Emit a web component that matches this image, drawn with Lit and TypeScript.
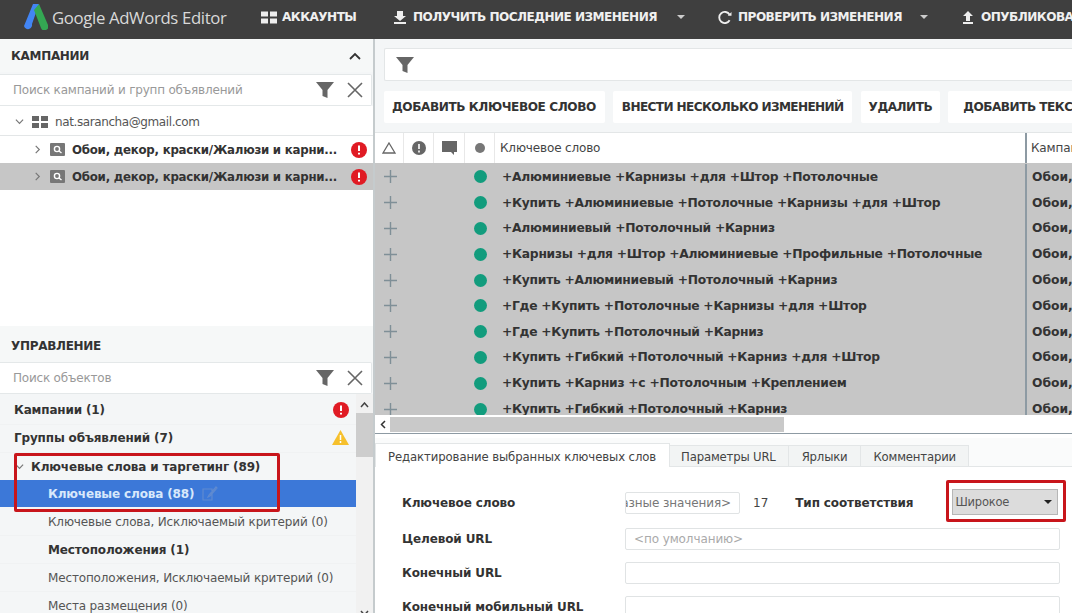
import { LitElement, html, css, svg } from "lit";
import { customElement } from "lit/decorators.js";

const keywords = [
  "+Алюминиевые +Карнизы +для +Штор +Потолочные",
  "+Купить +Алюминиевые +Потолочные +Карнизы +для +Штор",
  "+Алюминиевый +Потолочный +Карниз",
  "+Карнизы +для +Штор +Алюминиевые +Профильные +Потолочные",
  "+Купить +Алюминиевый +Потолочный +Карниз",
  "+Где +Купить +Потолочные +Карнизы +для +Штор",
  "+Где +Купить +Потолочный +Карниз",
  "+Купить +Гибкий +Потолочный +Карниз +для +Штор",
  "+Купить +Карниз +с +Потолочным +Креплением",
  "+Купить +Гибкий +Потолочный +Карниз",
];

const filterIcon = (cls: string) => html`<svg class=${cls} viewBox="0 0 18 18"><path d="M0 1h18l-6.5 8v8l-5-2V9z" fill="#666"/></svg>`;
const closeIcon = html`<svg class="ic16" viewBox="0 0 16 16"><path d="M1 1l14 14M15 1L1 15" stroke="#666" stroke-width="1.6" fill="none"/></svg>`;
const err = html`<svg class="ic16" viewBox="0 0 16 16"><circle cx="8" cy="8" r="8" fill="#e01b24"/><path d="M8 3.5v5.5M8 10.8v1.8" stroke="#fff" stroke-width="2" fill="none"/></svg>`;
const warn = html`<svg class="ic17" viewBox="0 0 17 15"><path d="M8.5 0L17 15H0z" fill="#f6c02c"/><path d="M8.5 5v5M8.5 11v2" stroke="#fff" stroke-width="1.5" fill="none"/></svg>`;
const gridIcon = (c: string) => svg`<path d="M0 0h7v5H0zM9 0h7v5H9zM0 7h7v5H0zM9 7h7v5H9z" fill=${c}/>`;
const chevR = html`<svg class="chev" viewBox="0 0 8 10"><path d="M2 1l4 4-4 4" stroke="#777" stroke-width="1.3" fill="none"/></svg>`;
const chevD = html`<svg class="chev" viewBox="0 0 10 8"><path d="M1 2l4 4 4-4" stroke="#777" stroke-width="1.3" fill="none"/></svg>`;
const caret = html`<svg class="caret" viewBox="0 0 8 4"><path d="M0 0h8L4 4z" fill="#ccc"/></svg>`;
const campIcon = html`<svg class="camp" viewBox="0 0 15 13"><rect width="15" height="13" rx="1" fill="#777"/><circle cx="7" cy="6" r="2.6" fill="none" stroke="#fff" stroke-width="1.4"/><path d="M9 8l2.5 2" stroke="#fff" stroke-width="1.4"/></svg>`;

@customElement("app-root")
export class AppRoot extends LitElement {
  static styles = css`
    :host { display: block; width: 1072px; height: 613px; overflow: hidden; position: relative; background: #f4f6f7;
      font-family: "DejaVu Sans", Tahoma, sans-serif; color: #333; }
    * { box-sizing: border-box; }
    svg { display: block; flex: none; }
    .ic16 { width: 16px; height: 16px; }
    .ic17 { width: 17px; height: 15px; }
    .ic18 { width: 18px; height: 18px; }
    .chev { width: 9px; height: 9px; }
    .caret { width: 8px; height: 4px; }
    .camp { width: 15px; height: 13px; }

    header { height: 39px; padding-bottom: 5px; background: #3f3f3f; display: flex; align-items: center; white-space: nowrap; overflow: hidden; color: #f0f0f0; }
    .logo { width: 24px; height: 26px; margin-left: 24px; }
    .brand { font: 16.75px "Open Sans", sans-serif; letter-spacing: -0.35px; color: #d9d9d9; margin-left: 4px; width: 209px; flex: none; }
    .tb { display: flex; align-items: center; gap: 5px; font: 700 12.1px "DejaVu Sans", sans-serif; letter-spacing: -0.55px; flex: none; }
    .tb svg.i { width: 16px; height: 13px; }
    .t1 { width: 131px; }
    .t2 { width: 325px; }
    .t3 { width: 243px; }
    .s2 { width: 10px; }
    .s3 { width: 8px; }

    main { display: grid; grid-template-columns: 373px 2px 1fr; height: 574px; }
    .left { display: flex; flex-direction: column; min-width: 0; }
    .split { background: #c5cbcd; }
    .phead { height: 33px; display: flex; align-items: center; justify-content: space-between; padding: 0 12px 0 11px; font: 700 12px "DejaVu Sans", sans-serif; letter-spacing: -0.3px; color: #333; background: #f6f8f8; flex: none; }
    .search { height: 32px; background: #fff; border: 1px solid #e4e8e9; border-left: 0; border-radius: 0 2px 2px 0; margin-right: 1px; display: flex; align-items: center; padding: 0 8px 0 13px; gap: 13px; color: #999; font-size: 12px; letter-spacing: -0.2px; flex: none; }
    .search span { flex: 1; }
    .search.first { margin-top: 2px; }

    .tree { background: #fff; height: 220px; flex: none; }
    .acct { height: 30px; padding-top: 2px; display: flex; align-items: center; padding-left: 15px; font-size: 12px; color: #555; border-bottom: 1px solid #e3e6e7; letter-spacing: -0.4px; }
    .acct svg.g { width: 16px; height: 12px; margin: 0 7px 0 8px; }
    .camp-row { height: 27px; display: flex; align-items: center; padding: 0 6px 0 33px; font-size: 11.8px; font-weight: 700; color: #333; letter-spacing: -0.25px; white-space: nowrap; }
    .camp-row.sel { background: #c6c6c6; }
    .camp-row .camp { margin: 0 7px 0 8px; }
    .camp-row span { flex: 1; overflow: hidden; }
    .gap { height: 3px; flex: none; background: #f6f8f8; }

    .list { flex: 1; display: grid; grid-template-columns: 1fr 17px; min-height: 0; }
    .items { padding-top: 3px; overflow: hidden; }
    .it { height: 28px; display: flex; align-items: center; font-size: 12px; color: #555; white-space: nowrap; letter-spacing: -0.15px; padding-right: 7px; border-bottom: 1px solid #f0f2f3; }
    .it span { flex: 1; }
    .it.l1 { padding-left: 14px; padding-bottom: 2px; font-weight: 700; color: #333; }
    .it.l2 { padding-left: 15px; font-weight: 700; color: #333; gap: 7px; height: 27px; border: 0; }
    .it.l3 { padding-left: 48px; }
    .it.b { font-weight: 700; color: #333; }
    .it.sel { background: #3c78d8; color: #d8e8fb; font-weight: 700; height: 27px; border: 0; margin-bottom: 1px; }
    .it.sel span { flex: none; }
    .edit { width: 16px; height: 15px; margin-left: 8px; }
    .sb { background: #f1f1f1; display: flex; flex-direction: column; align-items: center; position: relative; }
    .sb .arr { width: 9px; height: 6px; margin: 8px 0 5px; }
    .sb .thumb { width: 100%; height: 44px; background: #cdcdcd; }
    .sb .dn { position: absolute; bottom: -1px; }

    .right { display: flex; flex-direction: column; min-width: 0; overflow: hidden; }
    .filter { height: 33px; margin: 9px 0 0 9px; background: #fff; border: 1px solid #e3e6e7; border-right: 0; border-radius: 2px 0 0 2px; display: flex; align-items: center; padding-left: 11px; flex: none; }
    .actions { display: flex; gap: 8px; height: 32px; margin: 10px 0 0 9px; flex: none; white-space: nowrap; }
    .act { background: #fff; padding: 0 8px; display: flex; align-items: center; font: 700 12.1px "DejaVu Sans", sans-serif; letter-spacing: -0.5px; color: #333; border-radius: 2px; flex: none; }
    .act.first { padding-right: 9px; letter-spacing: -0.42px; }
    .act.wide { padding-left: 9px; letter-spacing: -0.62px; margin-right: 1px; }
    .act.last { padding-left: 15px; }
    .tbl { margin-top: 9px; height: 283px; overflow: hidden; background: #c6c6c6; flex: none; border-top: 1px solid #e3e6e7; }
    .tr { display: grid; grid-template-columns: 29px 30px 31px 30px 532px 1fr; align-items: center; height: 25.8px; white-space: nowrap; }
    .tr.h { height: 30px; margin-bottom: 1px; background: #fff; font-size: 12px; color: #444; letter-spacing: -0.15px; align-items: stretch; }
    .tr.h > div { display: flex; align-items: center; justify-content: center; border-right: 1px solid #e8e8e8; }
    .tr.h > .k { justify-content: flex-start; padding-left: 5px; border-right: 2px solid #8d9aa3; }
    .tr.h > .c { justify-content: flex-start; padding-left: 4px; border: 0; overflow: hidden; }
    .plus { width: 13px; height: 13px; margin-left: 9px; }
    .dot { width: 13px; height: 13px; border-radius: 50%; background: #129c7d; margin-left: 9px; }
    .kw { font-size: 12.3px; font-weight: 700; color: #333; padding-left: 7px; letter-spacing: -0.27px; border-right: 2px solid #8d9aa3; height: 100%; display: flex; align-items: center; }
    .cm { font-size: 12.3px; font-weight: 700; color: #333; padding-left: 5px; overflow: hidden; }
    .hs { height: 18px; background: #fff; display: flex; align-items: center; flex: none; }
    .hs .l { width: 15px; display: flex; justify-content: center; }
    .hs .l svg { width: 6px; height: 9px; }
    .hs .t { width: 394px; height: 15px; background: #c9c9c9; }
    .rule { height: 1px; background: #8d9aa3; flex: none; }
    .bottom { flex: 1; background: #fff; min-height: 0; overflow: hidden; }
    .tabs { display: flex; height: 29px; margin-top: 4px; align-items: flex-end; border-bottom: 1px solid #e3e6e7; background: #fafbfb; margin-bottom: 22px; }
    .tab { height: 21px; padding-top: 2px; background: #f2f4f4; border: 1px solid #e3e6e7; border-left: 0; border-bottom: 0; font-size: 11.7px; color: #444; display: flex; align-items: center; padding-right: 12px; padding-left: 11px; letter-spacing: -0.18px; white-space: nowrap; }
    .tab:nth-child(n+3) { padding-left: 13px; }
    .tab.on { background: #fff; height: 24px; border-left: 1px solid #e3e6e7; margin-bottom: -1px; padding-right: 13px; padding-left: 12px; letter-spacing: -0.1px; }
    .form { display: grid; grid-template-columns: 223px 1fr; row-gap: 12px; padding: 0 12px 0 27px; align-items: center; }
    .lb { font-size: 12px; font-weight: 700; color: #333; letter-spacing: -0.12px; white-space: nowrap; }
    .inp { height: 22px; background: #fff; border: 1px solid #e0e3e4; border-radius: 2px; font-size: 12px; color: #aaa; display: flex; align-items: center; padding-left: 8px; letter-spacing: -0.1px; white-space: nowrap; overflow: hidden; }
    .line { display: flex; align-items: center; }
    .line .inp { width: 115px; color: #777; padding-left: 2px; justify-content: flex-end; padding-right: 8px; }
    .line .n { font-size: 12px; color: #444; margin: 0 27px 0 13px; }
    .sel-box { margin: 0 0 1px 39px; width: 106px; height: 26px; background: #dcdcdc; border: 1px solid #b6b6b6; display: flex; align-items: center; justify-content: space-between; padding: 0 4px 0 2px; font-size: 11.5px; letter-spacing: -0.2px; color: #555; }
    .sel-box svg { width: 8px; height: 4px; margin-right: 1px; }

    .mark { position: absolute; border: 3px solid #c8151b; border-radius: 2px; pointer-events: none; }
    .m1 { left: 14px; top: 453px; width: 266px; height: 59px; }
    .m2 { left: 946px; top: 480px; width: 120px; height: 42px; }
  `;

  render() {
    return html`
      <header>
        <svg class="logo" viewBox="0 0 24 26">
          <path d="M9 0h6L8 20a4 4 0 0 1-8 2z" fill="#4285f4"/>
          <path d="M15 0l9 21a3.5 3.5 0 0 1-7 3L10 6z" fill="#34a853"/>
        </svg>
        <div class="brand">Google AdWords Editor</div>
        <div class="tb t1"><svg class="i" viewBox="0 0 16 12">${gridIcon("#eee")}</svg>АККАУНТЫ</div>
        <div class="tb t2">
          <svg class="i" viewBox="0 0 16 13"><path d="M5 0h6v5h3L8 10 2 5h3zM2 11h12v2H2z" fill="#eee"/></svg>ПОЛУЧИТЬ ПОСЛЕДНИЕ ИЗМЕНЕНИЯ
          <span class="s2"></span>${caret}
        </div>
        <div class="tb t3">
          <svg class="i" viewBox="0 0 16 14"><path d="M13 4a6 6 0 1 0 0 6" fill="none" stroke="#eee" stroke-width="2"/><path d="M11 5h4V1z" fill="#eee"/></svg>ПРОВЕРИТЬ ИЗМЕНЕНИЯ
          <span class="s3"></span>${caret}
        </div>
        <div class="tb">
          <svg class="i" viewBox="0 0 16 13"><path d="M8 0l5 5h-3v5H6V5H3zM3 11h10v2H3z" fill="#eee"/></svg>ОПУБЛИКОВАТЬ
        </div>
      </header>
      <main>
        <section class="left">
          <div class="phead">КАМПАНИИ <svg style="width:12px;height:8px" viewBox="0 0 12 8"><path d="M1 7l5-5 5 5" stroke="#333" stroke-width="1.8" fill="none"/></svg></div>
          <div class="search first"><span>Поиск кампаний и групп объявлений</span>${filterIcon("ic18")}${closeIcon}</div>
          <div class="tree">
            <div class="acct">${chevD}<svg class="g" viewBox="0 0 16 12">${gridIcon("#666")}</svg>nat.sarancha@gmail.com</div>
            <div class="camp-row">${chevR}${campIcon}<span>Обои, декор, краски/Жалюзи и карни...</span>${err}</div>
            <div class="camp-row sel">${chevR}${campIcon}<span>Обои, декор, краски/Жалюзи и карни...</span>${err}</div>
          </div>
          <div class="gap"></div>
          <div class="phead">УПРАВЛЕНИЕ</div>
          <div class="search"><span>Поиск объектов</span>${filterIcon("ic18")}${closeIcon}</div>
          <div class="list">
            <div class="items">
              <div class="it l1"><span>Кампании (1)</span>${err}</div>
              <div class="it l1"><span>Группы объявлений (7)</span>${warn}</div>
              <div class="it l2">${chevD}<span>Ключевые слова и таргетинг (89)</span></div>
              <div class="it l3 sel"><span>Ключевые слова (88)</span>
                <svg class="edit" viewBox="0 0 16 15"><path d="M1 3h9v11H1zM14 1L7 9l-1 2 2-1 7-8z" fill="none" stroke="#5f8ad0" stroke-width="1.2"/></svg></div>
              <div class="it l3"><span>Ключевые слова, Исключаемый критерий (0)</span></div>
              <div class="it l3 b"><span>Местоположения (1)</span></div>
              <div class="it l3"><span>Местоположения, Исключаемый критерий (0)</span></div>
              <div class="it l3"><span>Места размещения (0)</span></div>
            </div>
            <div class="sb">
              <svg class="arr" viewBox="0 0 9 6"><path d="M1 5l3.5-4L8 5" stroke="#444" stroke-width="1.5" fill="none"/></svg>
              <div class="thumb"></div>
              <svg class="arr dn" viewBox="0 0 9 6"><path d="M1 1l3.5 4L8 1" stroke="#444" stroke-width="1.5" fill="none"/></svg>
            </div>
          </div>
        </section>
        <div class="split"></div>
        <section class="right">
          <div class="filter">${filterIcon("ic18")}</div>
          <div class="actions">
            <div class="act first">ДОБАВИТЬ КЛЮЧЕВОЕ СЛОВО</div>
            <div class="act wide">ВНЕСТИ НЕСКОЛЬКО ИЗМЕНЕНИЙ</div>
            <div class="act">УДАЛИТЬ</div>
            <div class="act last">ДОБАВИТЬ ТЕКСТ</div>
          </div>
          <div class="tbl">
            <div class="tr h">
              <div><svg style="width:14px;height:12px" viewBox="0 0 14 12"><path d="M7 1l6 10H1z" fill="none" stroke="#666" stroke-width="1.3"/></svg></div>
              <div><svg style="width:14px;height:14px" viewBox="0 0 14 14"><circle cx="7" cy="7" r="7" fill="#666"/><path d="M7 3v5M7 9.5v2" stroke="#fff" stroke-width="1.6"/></svg></div>
              <div><svg style="width:15px;height:14px" viewBox="0 0 15 14"><path d="M0 0h15v11h-3v3l-3-3H0z" fill="#666"/></svg></div>
              <div><svg style="width:10px;height:10px" viewBox="0 0 10 10"><circle cx="5" cy="5" r="5" fill="#777"/></svg></div>
              <div class="k">Ключевое слово</div>
              <div class="c">Кампания</div>
            </div>
            ${keywords.map(k => html`
              <div class="tr">
                <svg class="plus" viewBox="0 0 13 13"><path d="M6.5 0v13M0 6.5h13" stroke="#7f8f97" stroke-width="1.4"/></svg>
                <i></i><i></i>
                <div class="dot"></div>
                <div class="kw">${k}</div>
                <div class="cm">Обои, декор</div>
              </div>`)}
          </div>
          <div class="hs"><div class="l"><svg viewBox="0 0 6 9"><path d="M5 1L1.5 4.5 5 8" stroke="#333" stroke-width="1.5" fill="none"/></svg></div><div class="t"></div></div>
          <div class="rule"></div>
          <div class="bottom">
            <div class="tabs">
              <div class="tab on">Редактирование выбранных ключевых слов</div>
              <div class="tab">Параметры URL</div>
              <div class="tab">Ярлыки</div>
              <div class="tab">Комментарии</div>
            </div>
            <div class="form">
              <div class="lb">Ключевое слово</div>
              <div class="line"><div class="inp">&lt;разные значения&gt;</div><span class="n">17</span><span class="lb">Тип соответствия</span>
                <div class="sel-box">Широкое <svg viewBox="0 0 8 4"><path d="M0 0h8L4 4z" fill="#222"/></svg></div></div>
              <div class="lb">Целевой URL</div><div class="inp">&lt;по умолчанию&gt;</div>
              <div class="lb">Конечный URL</div><div class="inp"></div>
              <div class="lb">Конечный мобильный URL</div><div class="inp"></div>
            </div>
          </div>
        </section>
      </main>
      <div class="mark m1"></div>
      <div class="mark m2"></div>
    `;
  }
}
